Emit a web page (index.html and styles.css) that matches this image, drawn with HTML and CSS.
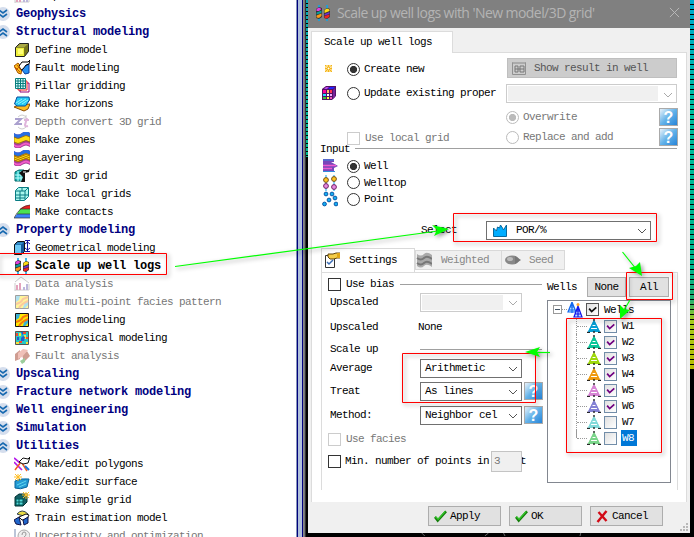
FILE: index.html
```html
<!DOCTYPE html>
<html lang="en">
<head>
<meta charset="utf-8">
<title>Scale up well logs</title>
<link rel="stylesheet" href="styles.css">
</head>
<body>
<svg class="sprite" aria-hidden="true">
  <symbol id="down" viewBox="0 0 16 16"><circle cx="8" cy="8" r="7" fill="#d5deed"/><path d="M4 4l4 3 4-3M4 8l4 3 4-3" fill="none" stroke="#1769b0" stroke-width="1.6"/></symbol>
  <symbol id="up" viewBox="0 0 16 16"><circle cx="8" cy="8" r="7" fill="#d5deed"/><path d="M4 8l4-3 4 3M4 12l4-3 4 3" fill="none" stroke="#1769b0" stroke-width="1.6"/></symbol>
  <symbol id="cube" viewBox="0 0 16 16"><path d="M1.500 5.500l4-4h9v8l-4 5h-9z" fill="#77761b" stroke="#222"/><path d="M2 6h8v8H2z" fill="#eeee3c"/><path d="M2 5.500l4-3.500h8l-4 3.500z" fill="#aaa944"/><path d="M4 7h5v5H4z" fill="#ffff75"/></symbol>
  <symbol id="fault" viewBox="0 0 16 16"><path d="M0 6l4-3 4 5-1 6-3-1z" fill="#ffc21c" stroke="#a75000"/><path d="M11 6l4-2v9l-4 1-3-4z" fill="#258ff1" stroke="#063e9c"/><path d="M5 6l3-4h6l2-2-1 4-3 1-3 4-2 1z" fill="#fff" stroke="#000"/><path d="M1 7l5 5M3 5l4 5M2 10l4-4" stroke="#c65c00"/></symbol>
  <symbol id="pillar" viewBox="0 0 16 16"><path d="M6 5h9v9H6z" fill="#fff" stroke="#900078"/><path d="M4 3h9v9H4z" fill="#fff" stroke="#f02020"/><path d="M1.500.5h10v10h-10zM4 .5v10M6.500.5v10M9 .5v10M1.500 3h10M1.500 5.500h10M1.500 8h10" fill="#d5ffff" stroke="#087c7c"/></symbol>
  <symbol id="horizon" viewBox="0 0 16 16"><path d="M0 11l5-2 11-1-2 5-4 2-5-2z" fill="#ffbd21" stroke="#8b4d00"/><path d="M.5 8L3 1h12l.5 3-4 6H3z" fill="#25c8f3" stroke="#064d9d"/><path d="M2 7l6-4M4 8l8-5M8 8l6-4" stroke="#8ff4ff"/></symbol>
  <symbol id="depth" viewBox="0 0 16 16"><path d="M1 5h6L2 10h6" fill="none" stroke="#aaa0ce" stroke-width="2"/><path d="M13 4l-2 7q0 2 3 1M10 6h5" fill="none" stroke="#dfb5db" stroke-width="2"/><path d="M4 3q4-4 8 0M4 13q4 4 8 0M12 1v3H9" fill="none" stroke="#ccc"/></symbol>
  <symbol id="zones" viewBox="0 0 16 16"><path d="M0 1q4 3 8 0t8 0v14q-4-3-8 0t-8 0z" fill="#a43f94"/><path d="M0 1q4 3 8 0t8 0v4q-4-3-8 0t-8 0z" fill="#286ee2"/><path d="M0 5q4 3 8 0t8 0v5q-4-3-8 0t-8 0z" fill="#ffdd13" stroke="#885f00" stroke-width=".7"/><path d="M0 12q4 3 8 0t8 0v2q-4-3-8 0t-8 0z" fill="#f45cca"/></symbol>
  <symbol id="layers" viewBox="0 0 16 16"><use href="#zones"/><path d="M0 6q4 3 8 0t8 0M0 8q4 3 8 0t8 0M0 10q4 3 8 0t8 0" stroke="#b37500" fill="none"/></symbol>
  <symbol id="edit" viewBox="0 0 16 16"><path d="M1 4l4-2h5v11H1z" fill="#20bcbc" stroke="#066"/><path d="M1 7h9M1 10h9M4 3v10M7 3v10" stroke="#bff"/><path d="M5 5l4-3h5l2-2-1 4-4 1v9H7l2-5z" fill="#111"/><path d="M9 4h3" stroke="#fff"/></symbol>
  <symbol id="local" viewBox="0 0 16 16"><path d="M1.500 4.500l3-3h10v9l-4 4h-9z" fill="#a9f7ed" stroke="#087b82"/><path d="M2 5h9v9M11 5l3-3M6 5v9M2 9h9M8 2v3M11 9h4M2 12h9" fill="none" stroke="#087b82"/></symbol>
  <symbol id="contacts" viewBox="0 0 16 16"><path d="M0 14l3-4h13v4z" fill="#3c82f6"/><path d="M3 10l3-5h10v5z" fill="#4be250"/><path d="M6 5q4-4 10-4v4z" fill="#ed2020"/><path d="M0 14Q6 2 16 1M3 10h13M6 5h10M0 14h16" fill="none" stroke="#333" stroke-width=".7"/></symbol>
  <symbol id="geom" viewBox="0 0 16 16"><path d="M.5 4.500l3-3h7v10l-3 3h-7z" fill="#16589a" stroke="#111"/><path d="M1 5h6v9H1z" fill="#6cc8f5"/><path d="M1.500 4.500l2.500-2h6l-3 2z" fill="#3796cf"/><path d="M13.500 1v11M11 .5h5M11 11.500h5M11 4l2.500-2L16 4M11 8l2.500 2L16 8" stroke="#11119b" fill="none"/></symbol>
  <symbol id="logs" viewBox="0 0 16 16"><path d="M4 0v16M12 0v16" stroke="#08a7ec" stroke-width="1.500"/><path d="M1 4l3-2 3 1v9l-3 2-3-1zM9 5l3-2 3 1v8l-3 2-3-1z" fill="#333"/><path d="M1.500 4l2.500-1.500L6.500 4 4 6H1.500z" fill="#e03fdc"/><path d="M1.500 7.500l5-2V8l-5 1.500z" fill="#0b9c9c"/><path d="M1.500 10.500l5-2V11L4 13l-2.500-.5z" fill="#f89b18"/><path d="M9.500 5L12 3.500l2.500 1V6l-5 2z" fill="#ffda11"/><path d="M9.500 9l5-2v2l-5 1.500z" fill="#7030d0"/><path d="M9.500 11l5-1.500v2L12 13.500l-2.500-.5z" fill="#e22"/></symbol>
  <symbol id="data" viewBox="0 0 16 16"><path d="M1 6l6-5 8 6M1 15V7M1 14h14V8" fill="none" stroke="#ccc"/><path d="M3 14V9M6 14V7" stroke="#e4a4bd" stroke-width="2"/><path d="M10 14v-3M13 14V8" stroke="#bdb8dc" stroke-width="2"/></symbol>
  <symbol id="facies" viewBox="0 0 16 16"><path d="M1.500 1.500h13v13h-13z" fill="#ffe900" stroke="#111"/><path d="M2 2h4l-1 4-3 2zM9 14q1-6 5-7v4l-3 3z" fill="#3ab2d5"/><path d="M2 10q5-1 7-5l5-2M5 14q2-4 9-7" fill="none" stroke="#f47a10" stroke-width="2"/></symbol>
  <symbol id="petro" viewBox="0 0 16 16"><path d="M1.500 1.500h13v13h-13z" fill="#25c9c8" stroke="#555"/><path d="M2 3h2v3H2zM9 2h3v2H9zM5 11h3v2H5zM12 7h2v2h-2z" fill="#f04a32"/><path d="M5 3h2v3H5zM10 5h2v4h-2zM2 12h3v2H2zM12 12h2v2h-2z" fill="#f4e43c"/><path d="M7 2h2v4l2 1-1 4H7V8l2-2M3 7h2v3H3z" fill="#275aca"/></symbol>
  <symbol id="faulta" viewBox="0 0 16 16"><path d="M1 6l5-4v9l-5 2zM8 7l5-4 3 5-6 6z" fill="#cf9d91"/><path d="M4 5l5-4 5 1-6 7-4 2z" fill="#f0c0b8"/><path d="M6 13l5-3v4l-3 2z" fill="#9bce9b"/></symbol>
  <symbol id="poly" viewBox="0 0 16 16"><path d="M0 2l6 5M0 6l8 8" stroke="#b51bea" stroke-width="1.700" fill="none"/><path d="M1 14l6-8M8 7l5 8" stroke="#f55b23" stroke-width="1.500"/><path d="M5 6l4-4 5 1 2-2-2 6-5 1z" fill="#fff" stroke="#111"/><path d="M11 10l4 4" stroke="#1674dd" stroke-width="2"/></symbol>
  <symbol id="surface" viewBox="0 0 16 16"><path d="M1 7q7-3 14-2l-2 8q-7 3-12 1z" fill="#249bd5" stroke="#07649a"/><path d="M3 11l9-4M5 13l7-3" stroke="#61d8ed"/><path d="M0 3h8M4 0v7M1 0l6 6M7 0L1 6" stroke="#ffbd24"/></symbol>
  <symbol id="simple" viewBox="0 0 16 16"><path d="M1 5l4-3h8v8l-4 4H1z" fill="#145f64" stroke="#033"/><path d="M2 7h7v6H2zM5 7v6M2 10h7" fill="#55dbdb" stroke="#055"/><path d="M8 3h8M12 0v7M9 0l6 6M15 0L9 6" stroke="#ffbd24"/></symbol>
  <symbol id="train" viewBox="0 0 16 16"><path d="M3 4q5-6 11 0l-3 2-5-1z" fill="#eadb45" stroke="#345"/><path d="M5 7l7-3 3 1-2 4-5 1z" fill="#fff" stroke="#111"/><path d="M0 10l5-3 2 8-5-1zM9 10l5-3v6l-4 2z" fill="#2167cc" stroke="#114"/></symbol>
  <symbol id="unc" viewBox="0 0 16 16"><path d="M1 1v14h14" fill="none" stroke="#bbc5d8" stroke-width="2"/><circle cx="10" cy="8" r="6" fill="#eee" stroke="#aaa"/><path d="M8 7q0-3 2-3t2 2-2 3v1" fill="none" stroke="#999"/></symbol>
  <symbol id="star" viewBox="0 0 16 16"><path d="M4 4h7v7H4z" fill="#ffd97a"/><path d="M4 4l7 7M11 4l-7 7M7.500 4v7M4 7.500h7" stroke="#f1b51d"/><path d="M7 7h1v1H7zM5 6h1M9 6h1" fill="#fff" stroke="#fff" stroke-width=".8"/></symbol>
  <symbol id="rubik" viewBox="0 0 16 16"><path d="M1 4l4-3h10v10l-4 4H1z" fill="#521164"/><path d="M2 5h3v3H2z" fill="#f09"/><path d="M6 5h2v3H6z" fill="#fb6"/><path d="M9 5h2v3H9z" fill="#f35"/><path d="M2 9h3v2H2z" fill="#2df"/><path d="M6 9h2v2H6z" fill="#fff"/><path d="M9 9h2v2H9z" fill="#eaf"/><path d="M2 12h3v2H2z" fill="#3c3"/><path d="M6 12h2v2H6z" fill="#ff3"/><path d="M9 12h2v2H9z" fill="#e5b"/><path d="M5 2h3L6 4H3z" fill="#b4e"/><path d="M9 2h5l-2 2H7z" fill="#22f"/><path d="M12 5l2-2v9l-2 2z" fill="#729"/></symbol>
  <symbol id="well" viewBox="0 0 16 16"><path d="M1 1h11v3H9l7 4-4 2v4H1z" fill="#7946ba"/><path d="M1 2h11M1 13.500h12" stroke="#328ddd"/><path d="M1 7.500h13M1 10.500h9" stroke="#f05bcf" stroke-width="1.500"/></symbol>
  <symbol id="tops" viewBox="0 0 16 16"><path d="M4 0v16M12 0v16" stroke="#08a0e9"/><g fill="#ffc521" stroke="#775017"><circle cx="4" cy="5" r="2.400"/><circle cx="12" cy="4" r="2.400"/></g><g fill="#e58adf" stroke="#722065"><circle cx="4" cy="11" r="2.400"/><circle cx="12" cy="12" r="2.400"/></g></symbol>
  <symbol id="points" viewBox="0 0 16 16"><g fill="#13aef4" stroke="#064d9d" stroke-width=".9"><circle cx="4" cy="3" r="1.900"/><circle cx="10" cy="3" r="1.900"/><circle cx="13" cy="7" r="1.900"/><circle cx="7" cy="9" r="1.900"/><circle cx="2.500" cy="13" r="1.900"/><circle cx="14" cy="13" r="1.900"/></g></symbol>
  <symbol id="hist" viewBox="0 0 16 16"><path d="M1.500 14.500V6l3 3 1-4 2 1 1-3 2 3 1 2 3-5v11.500z" fill="#00adff" stroke="#08699d"/></symbol>
  <symbol id="settings" viewBox="0 0 16 16"><path d="M1.500 3.500h9v12h-9z" fill="#fff" stroke="#333"/><path d="M4 2h5l3-1h4v5h-3l-3 1H6L4 5z" fill="#f3cc49" stroke="#654508"/><path d="M13 1h3v5h-3z" fill="#e1a716"/><path d="M3 10l2 2 4-4" stroke="#3b6cb4" fill="none" stroke-width="1.500"/></symbol>
  <symbol id="flag" viewBox="0 0 16 16"><path d="M1 2q4 3 7 0t8 1v12q-5-4-8-1t-7 0z" fill="#aaa"/><path d="M1 6q4 3 7 0t8 1M1 11q4 3 7 0t8 1" fill="none" stroke="#777" stroke-width="2"/></symbol>
  <symbol id="seed" viewBox="0 0 16 16"><ellipse cx="7" cy="8" rx="7" ry="4.500" fill="#888"/><path d="M10 4l6 4-6 4z" fill="#777"/><ellipse cx="5" cy="7" rx="3" ry="2" fill="#bbb"/></symbol>
  <symbol id="result" viewBox="0 0 14 14"><path d="M.5 1.500h13v12H.5z" fill="#ccc" stroke="#919191"/><path d="M1 2h12" stroke="#aaa" stroke-width="2"/><path d="M3 5h3v6H3zM8 5h4v6H8zM3 8h9" fill="none" stroke="#777"/></symbol>
  <symbol id="rig" viewBox="0 0 14 14"><path d="M7 1l6 12H1z" fill="currentColor"/><path d="M5 6.500h4M4 9.500h6" stroke="#fff" stroke-width="1"/><path d="M5 5h4M4 8h6M3 11h8" stroke="currentColor" stroke-width="1.400"/><path d="M7 0v4M7 12v2M0 13.500h3M11 13.500h3" fill="none" stroke="#222" stroke-width="1.400"/><path d="M7 2L1.500 13M7 2l5.500 11" stroke="currentColor" stroke-width="1.500"/></symbol>
  <symbol id="rigs" viewBox="0 0 16 16"><path d="M5 0L1 10h8zM5 0v11M3 5h4M2 8h6" fill="#bde5ff" stroke="#1469ee" stroke-width="1.200"/><path d="M11 4L7 15h8zM11 3v12M9 9h4M8 12h6" fill="#bde5ff" stroke="#1616ec" stroke-width="1.200"/><circle cx="11" cy="2.500" r="1.500" fill="#ffa42a"/></symbol>
  <symbol id="ok" viewBox="0 0 14 14"><path d="M1 8l3 4L13 2" fill="none" stroke="#147d0b" stroke-width="2.600"/><path d="M1.500 7.500l3 3L12 2" fill="none" stroke="#34c72a" stroke-width="1.500"/></symbol>
  <symbol id="no" viewBox="0 0 12 14"><path d="M2 3l8 9M10 2L1 13" fill="none" stroke="#d20a16" stroke-width="2.400"/></symbol>
</svg>

<div class="screen">
  <nav class="tree">
    <div class="item cut"><svg><use href="#data"/></svg><span>Simple</span></div>
    <div class="group"><svg><use href="#down"/></svg><span>Geophysics</span></div>
    <div class="group"><svg><use href="#up"/></svg><span>Structural modeling</span></div>
    <div class="item"><svg><use href="#cube"/></svg><span>Define model</span></div>
    <div class="item"><svg><use href="#fault"/></svg><span>Fault modeling</span></div>
    <div class="item"><svg><use href="#pillar"/></svg><span>Pillar gridding</span></div>
    <div class="item"><svg><use href="#horizon"/></svg><span>Make horizons</span></div>
    <div class="item off"><svg><use href="#depth"/></svg><span>Depth convert 3D grid</span></div>
    <div class="item"><svg><use href="#zones"/></svg><span>Make zones</span></div>
    <div class="item"><svg><use href="#layers"/></svg><span>Layering</span></div>
    <div class="item"><svg><use href="#edit"/></svg><span>Edit 3D grid</span></div>
    <div class="item"><svg><use href="#local"/></svg><span>Make local grids</span></div>
    <div class="item"><svg><use href="#contacts"/></svg><span>Make contacts</span></div>
    <div class="group"><svg><use href="#up"/></svg><span>Property modeling</span></div>
    <div class="item"><svg><use href="#geom"/></svg><span>Geometrical modeling</span></div>
    <div class="item current"><svg><use href="#logs"/></svg><span>Scale up well logs</span></div>
    <div class="item off"><svg><use href="#data"/></svg><span>Data analysis</span></div>
    <div class="item off faded"><svg><use href="#facies"/></svg><span>Make multi-point facies pattern</span></div>
    <div class="item"><svg><use href="#facies"/></svg><span>Facies modeling</span></div>
    <div class="item"><svg><use href="#petro"/></svg><span>Petrophysical modeling</span></div>
    <div class="item off"><svg><use href="#faulta"/></svg><span>Fault analysis</span></div>
    <div class="group"><svg><use href="#down"/></svg><span>Upscaling</span></div>
    <div class="group"><svg><use href="#down"/></svg><span>Fracture network modeling</span></div>
    <div class="group"><svg><use href="#down"/></svg><span>Well engineering</span></div>
    <div class="group"><svg><use href="#down"/></svg><span>Simulation</span></div>
    <div class="group"><svg><use href="#up"/></svg><span>Utilities</span></div>
    <div class="item"><svg><use href="#poly"/></svg><span>Make/edit polygons</span></div>
    <div class="item"><svg><use href="#surface"/></svg><span>Make/edit surface</span></div>
    <div class="item"><svg><use href="#simple"/></svg><span>Make simple grid</span></div>
    <div class="item"><svg><use href="#train"/></svg><span>Train estimation model</span></div>
    <div class="item off"><svg><use href="#unc"/></svg><span>Uncertainty and optimization</span></div>
  </nav>
  <div class="splitter"></div>
  <div class="canvas-left"></div>
  <div class="middle">
    <section class="dialog">
      <header class="title"><svg class="i16"><use href="#logs"/></svg><span>Scale up well logs with 'New model/3D grid'</span><svg class="close" viewBox="0 0 12 12"><path d="M1 1l10 10M11 1L1 11" stroke="#bcbcbc" fill="none"/></svg></header>
      <div class="maintab">Scale up well logs</div>
      <div class="page">
        <div class="create">
          <div class="modes">
            <div class="mode"><svg class="i16"><use href="#star"/></svg><i class="radio on"></i><span>Create new</span></div>
            <div class="mode second"><svg class="i16"><use href="#rubik"/></svg><i class="radio"></i><span>Update existing proper</span></div>
            <div class="mode local off"><i class="check"></i><span>Use local grid</span></div>
          </div>
          <div class="result">
            <button class="show"><svg><use href="#result"/></svg>Show result in well</button>
            <div class="combo off wide"><span></span><svg viewBox="0 0 10 6"><path d="M1 1l4 4 4-4"/></svg></div>
            <div class="mode off"><i class="radio on"></i><span>Overwrite</span><b class="help">?</b></div>
            <div class="mode off"><i class="radio"></i><span>Replace and add</span><b class="help">?</b></div>
          </div>
        </div>
        <div class="rule input"><span>Input</span><hr></div>
        <div class="inputs">
          <div class="mode"><svg class="i16"><use href="#well"/></svg><i class="radio on"></i><span>Well</span></div>
          <div class="mode"><svg class="i16"><use href="#tops"/></svg><i class="radio"></i><span>Welltop</span></div>
          <div class="mode"><svg class="i16"><use href="#points"/></svg><i class="radio"></i><span>Point</span></div>
        </div>
        <div class="select"><span>Select</span><div class="combo"><svg class="i16"><use href="#hist"/></svg><span>POR/%</span><svg class="arrow" viewBox="0 0 10 6"><path d="M1 1l4 4 4-4"/></svg></div></div>
        <div class="tabs">
          <div class="tab active"><svg class="i16"><use href="#settings"/></svg>Settings</div>
          <div class="tab weighted"><svg class="i16"><use href="#flag"/></svg>Weighted</div>
          <div class="tab seed"><svg class="i16"><use href="#seed"/></svg>Seed</div>
        </div>
        <div class="pane">
          <div class="form">
            <div class="rule bias"><i class="check"></i><span>Use bias</span><hr></div>
            <div class="field r1"><span>Upscaled</span><div class="combo off"><span></span><svg viewBox="0 0 10 6"><path d="M1 1l4 4 4-4"/></svg></div></div>
            <div class="field r2"><span>Upscaled</span><em>None</em></div>
            <div class="field r3"><span>Scale up</span><hr></div>
            <div class="field r4"><span>Average</span><div class="combo"><span>Arithmetic</span><svg viewBox="0 0 10 6"><path d="M1 1l4 4 4-4"/></svg></div></div>
            <div class="field r5"><span>Treat</span><div class="combo"><span>As lines</span><svg viewBox="0 0 10 6"><path d="M1 1l4 4 4-4"/></svg></div><b class="help">?</b></div>
            <div class="field r5"><span>Method:</span><div class="combo"><span>Neighbor cel</span><svg viewBox="0 0 10 6"><path d="M1 1l4 4 4-4"/></svg></div><b class="help">?</b></div>
            <div class="opt off"><i class="check"></i><span>Use facies</span></div>
            <div class="opt min"><i class="check"></i><span>Min. number of points in</span><div class="num">3</div><span class="tail">t</span></div>
          </div>
          <div class="wells">
            <div class="bar"><span>Wells</span><button>None</button><button>All</button></div>
            <div class="list">
              <div class="root"><i class="minus"></i><i class="dots"></i><svg class="i16"><use href="#rigs"/></svg><svg class="box" viewBox="0 0 13 13"><path d="M2.500 5.500l3 3.500L11 4" stroke="#111"/></svg><span>Wells</span></div>
              <div class="leaves">
                <div class="leaf"><svg class="rig c1"><use href="#rig"/></svg><svg class="box" viewBox="0 0 13 13"><path d="M2.500 5.500l3 3.500L11 4"/></svg><span>W1</span></div>
                <div class="leaf"><svg class="rig c2"><use href="#rig"/></svg><svg class="box" viewBox="0 0 13 13"><path d="M2.500 5.500l3 3.500L11 4"/></svg><span>W2</span></div>
                <div class="leaf"><svg class="rig c3"><use href="#rig"/></svg><svg class="box" viewBox="0 0 13 13"><path d="M2.500 5.500l3 3.500L11 4"/></svg><span>W3</span></div>
                <div class="leaf"><svg class="rig c4"><use href="#rig"/></svg><svg class="box" viewBox="0 0 13 13"><path d="M2.500 5.500l3 3.500L11 4"/></svg><span>W4</span></div>
                <div class="leaf"><svg class="rig c5"><use href="#rig"/></svg><svg class="box" viewBox="0 0 13 13"><path d="M2.500 5.500l3 3.500L11 4"/></svg><span>W5</span></div>
                <div class="leaf"><svg class="rig c6"><use href="#rig"/></svg><svg class="box" viewBox="0 0 13 13"><path d="M2.500 5.500l3 3.500L11 4"/></svg><span>W6</span></div>
                <div class="leaf"><svg class="rig c7"><use href="#rig"/></svg><svg class="box"></svg><span>W7</span></div>
                <div class="leaf"><svg class="rig c8"><use href="#rig"/></svg><svg class="box"></svg><span class="sel">W8</span></div>
              </div>
            </div>
          </div>
        </div>
      </div>
      <footer class="buttons">
        <button><svg><use href="#ok"/></svg>Apply</button>
        <button><svg><use href="#ok"/></svg>OK</button>
        <button><svg class="x"><use href="#no"/></svg>Cancel</button>
        <svg class="grip" viewBox="0 0 8 8"><path d="M6 0h2v2H6zM3 3h2v2H3zM6 3h2v2H6zM0 6h2v2H0zM3 6h2v2H3zM6 6h2v2H6z" fill="#b8b8b8"/></svg>
      </footer>
    </section>
    <svg class="below" viewBox="0 0 382 4"><path d="M88 0l4 4M172 4l5-4M197 0l2 4M300 0l-1 4" stroke="#888"/></svg>
  </div>
  <div class="canvas-right"></div>
</div>

<svg class="notes" viewBox="0 0 694 537">
  <g fill="none" stroke="#f00" stroke-width="1">
    <path d="M-2 253.500H166.500V274.500H-2z"/>
    <path d="M453.500 213.500H656.500V241.500H453.500z"/>
    <path d="M402.500 353.500H535.500V402.500H402.500z"/>
    <path d="M626.500 272.500H672.500V299.500H626.500z"/>
    <path d="M566.500 318.500H661.500V452.500H566.500z"/>
  </g>
  <g stroke="#0f0" fill="#0f0" stroke-width="1.200">
    <path d="M175 266.500L438 231"/><path d="M449 229l-17-4 5 5-3 6z" stroke="none"/>
    <path d="M622.500 252l12 15"/><path d="M642 276l-2-14-4 4-7 2z" stroke="none"/>
    <path d="M630 300l-6 10"/><path d="M620 319l0-14 4 4 6 1z" stroke="none"/>
    <path d="M550 352.500h-14"/><path d="M525 352l15-5-3 5 3 5z" stroke="none"/>
  </g>
</svg>
</body>
</html>
```
FILE: styles.css
```css
* { box-sizing: border-box; }
body { margin: 0; width: 694px; height: 537px; overflow: hidden; background: #fff; color: #000; font: 11px/14px "Liberation Mono", monospace; letter-spacing: -0.6px; position: relative; }
.sprite { display: none; }
svg { display: block; flex: none; overflow: visible; }
span { white-space: pre; }
.i16 { width: 16px; height: 16px; }
.screen { display: flex; height: 537px; }

/* Process tree */
.tree { width: 296px; overflow: hidden; display: flex; flex-direction: column; margin-top: -13px; height: 550px; flex: none; }
.tree > div { height: 18px; flex: none; display: flex; align-items: center; }
.tree svg { width: 16px; height: 16px; }
.item { padding-left: 14px; gap: 5px; }
.group { gap: 5px; margin-left: -5px; color: #000080; }
.group, .current { font-weight: bold; font-size: 12px; letter-spacing: -0.2px; }
.off { color: #777; }
.faded svg { opacity: .4; }

.splitter { width: 10px; flex: none; background: linear-gradient(90deg, #8493b8 0 1px, #00007c 1px 2px, #b0c0dc 2px 5.500px, #000080 5.500px 7px, #888 7px 8px, #777 8px 9px, #333 9px); }
.canvas-left { width: 2px; flex: none; background: repeating-linear-gradient(#0000 0 3px, #000 3px 4px), linear-gradient(#08a4b4, #00b890 157px, #000 157px); }
.canvas-right { width: 4px; flex: none; background: repeating-linear-gradient(#0000 0 4px, #000 4px 5px), linear-gradient(#00a8cf, #00bea0 110px, #00b58b 270px, #25b070 300px, #a5cc1c 320px, #b9bd00 369px, #000 369px); }
.middle { width: 382px; flex: none; background: #000; }
.below { width: 382px; height: 3px; overflow: hidden; }

/* Dialog */
.dialog { height: 533px; background: #f0f0f0; }
.title { height: 28px; background: #808080; color: #b4b4b4; display: flex; align-items: center; padding: 0 10px 3px 7px; font: 14px/20px "Open Sans", sans-serif; letter-spacing: -0.56px; }
.title span { margin-left: 6px; flex: 1; }
.close { width: 11px; height: 11px; }
.maintab { position: relative; margin: 3px 0 -1px 3px; width: 142px; height: 22px; background: #fff; border: 1px solid #dcdcdc; border-bottom: 0; padding: 3px 0 0 12px; }
.page { margin-left: 3px; width: 376px; height: 450px; background: #fff; border: 1px solid #dcdcdc; border-bottom: 0; }
.mode { display: flex; align-items: center; }
.radio { width: 13px; height: 13px; border: 1px solid #333; border-radius: 50%; flex: none; background: #fff; }
.radio.on { background: radial-gradient(circle, #333 0 3.3px, #fff 3.9px); }
.off .radio { border-color: #bbb; }
.off .radio.on { background: radial-gradient(circle, #bbb 0 3.3px, #fff 3.9px); }
.mode .radio + span { margin-left: 4px; }
.create { display: flex; height: 90px; }
.modes { width: 194px; flex: none; padding: 4px 0 0 9px; }
.modes .mode { height: 24px; }
.modes .radio, .inputs .radio { margin-left: 10px; }
.modes .local { margin: 22px 0 0 26px; height: 22px; }
.check { width: 13px; height: 13px; border: 1px solid #333; background: #fff; flex: none; }
.off .check { border-color: #ccc; }
.check + span { margin-left: 5px; }
button { font: inherit; letter-spacing: inherit; color: #000; background: #e1e1e1; border: 1px solid #adadad; border-radius: 0; padding: 0; display: flex; align-items: center; justify-content: center; height: 20px; }
.show { margin: 5px 0 6px 1px; width: 170px; background: #ccc; border-color: #bfbfbf; color: #555; justify-content: flex-start; padding-left: 4px; gap: 8px; }
.show svg { width: 14px; height: 14px; }
.combo { width: 102px; height: 19px; border: 1px solid #707070; background: #fff; display: flex; align-items: center; justify-content: space-between; padding: 0 3px 0 4px; }
.combo > svg:last-child { width: 10px; height: 6px; fill: none; stroke: #555; margin-top: 2px; }
.combo.off { border-color: #ccc; padding-left: 1px; }
.combo.off span { height: 15px; width: 81px; background: #f0f0f0; }
.combo.off > svg:last-child { stroke: #aaa; }
.combo.wide { width: 171px; }
.combo.wide span { width: 150px; }
.result .mode { height: 20px; width: 172px; }
.result .wide + .mode { margin-top: 4px; }
.help { width: 19px; height: 18px; margin-left: auto; background: linear-gradient(135deg, #dcecf8 5%, #63b2e9 50%, #2684d9); border: 1px solid #aaa; color: #fff; font: bold 16px/17px "Liberation Sans", sans-serif; text-align: center; letter-spacing: 0; }
.rule, .field { display: flex; align-items: center; }
hr { border: 0; height: 1px; background: #a0a0a0; margin: 0; flex: 1; }
.input { height: 11px; margin-bottom: 1px; padding: 0 9px 0 8px; }
.input hr { margin-left: 5px; }
.inputs { padding: 3px 0 0 10px; height: 53px; }
.inputs .mode { height: 16.5px; }
.inputs .radio { margin-left: 9px; }
.select { display: flex; align-items: center; height: 20px; margin: 12px 0 0 109px; }
.select .combo { margin-left: 29px; width: 165px; padding-left: 5px; }
.select .combo span { margin-left: 8px; flex: 1; }
.tabs { display: flex; align-items: flex-end; margin: 8px 0 0 9px; height: 24px; }
.tab { height: 20px; margin-bottom: 2px; border: 1px solid #d9d9d9; background: #f0f0f0; color: #888; display: flex; align-items: center; gap: 9px; width: 87px; }
.tab.active { width: 94px; height: 24px; margin: 0; background: #fff; border-bottom: 0; color: #000; padding: 0 0 2px 2px; gap: 9px; }
.tab.seed { width: 63px; border-left: 0; padding-left: 3px; gap: 8px; }
.pane { margin-left: 9px; width: 357px; height: 218px; border: 1px solid #dcdcdc; border-bottom: 0; display: flex; }
.form { width: 225px; flex: none; padding: 3px 0 0 6px; }
.bias { height: 16px; padding-right: 5px; }
.bias hr { margin-left: 6px; }
.field { padding-left: 2px; height: 24px; }
.field > span { width: 90px; flex: none; }
.field .help { margin-left: 2px; }
.r1 { height: 20px; }
.r2 { height: 29px; }
.r2 em { font-style: normal; margin-left: -2px; }
.r3 { height: 16px; padding-right: 5px; }
.r4 { height: 22px; }
.r5 { height: 24px; }
.opt { height: 24px; display: flex; align-items: center; }
.min { height: 20px; }
.min .check + span { margin-left: 4px; width: 146px; }
.num { position: relative; z-index: 1; width: 31px; height: 21px; border: 1px solid #c4c4c4; background: #f0f0f0; color: #777; padding: 2px; flex: none; }
.tail { width: 4px; margin-left: -2px; }
.wells { width: 124px; flex: none; padding-top: 4px; }
.bar { display: flex; align-items: center; height: 20px; }
.bar span { width: 40px; }
.bar button { width: 39px; }
.bar button + button { margin-left: 3px; width: 40px; }
.list { margin-top: 3px; width: 124px; height: 183px; border: 1px solid #828790; }
.root { height: 17px; display: flex; align-items: center; padding-left: 5px; }
.minus { width: 9px; height: 9px; border: 1px solid #999; background: linear-gradient(#456, #456) center / 5px 1px no-repeat; }
.dots { width: 5px; border-top: 1px dotted #999; }
.box { width: 13px; height: 13px; border: 1px solid #728da8; background: linear-gradient(135deg, #e0e0e0, #fff); fill: none; stroke: #700080; stroke-width: 2; margin-left: 3px; }
.root .box { border-color: #555; }
.box + span { margin-left: 4px; padding: 0 1px; }
.leaves { margin-left: 28px; }
.leaf { height: 16px; display: flex; align-items: center; border-left: 1px dotted #999; }
.leaf:last-child { border-image: linear-gradient(#999 50%, #0000 50%) 1; }
.leaf::before { content: ""; width: 10px; border-top: 1px dotted #999; }
.rig { width: 14px; height: 14px; }
.c1 { color: #079ed4; } .c2 { color: #08c69b; } .c3 { color: #9fd80d; } .c4 { color: #ef9b10; }
.c5 { color: #d784d5; } .c6 { color: #8482d5; } .c7 { color: #82dada; } .c8 { color: #7bd58a; }
.leaf .sel { background: #0078d7; color: #fff; height: 16px; line-height: 16px; padding-right: 3px; }
.buttons { display: flex; gap: 8px; padding: 4px 0 0 120px; }
.buttons button { width: 73px; justify-content: flex-start; padding-left: 5px; gap: 3px; }
.buttons svg { width: 13px; height: 14px; }
.buttons .grip { width: 8px; height: 8px; margin: 17px 0 0 9px; }

/* Call-out frames and arrows over the window */
.notes { position: absolute; left: 0; top: 0; width: 694px; height: 537px; filter: drop-shadow(2px 2px 2px #0006); pointer-events: none; }
```
